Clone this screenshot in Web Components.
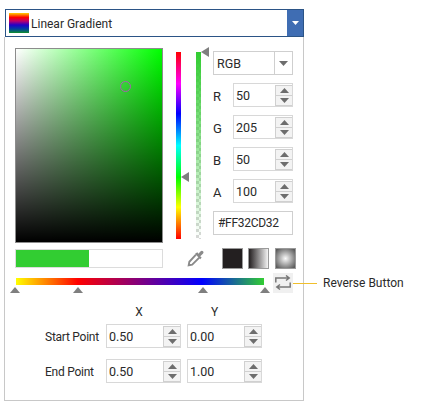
<!doctype html>
<html>
<head>
<meta charset="utf-8">
<style>
    html, body { margin: 0; background: #fff; }
    body { font: 12px Roboto, sans-serif; color: #2a2a2a; }
</style>
</head>
<body>
<brush-editor></brush-editor>
<script>
const arrow = dir => `<svg width="9" height="5" viewBox="0 0 9 5"><path fill="#6d6d6d" d="${ dir == 'up' ? 'M0 5 L4.5 0 L9 5Z' : 'M0 0 L9 0 L4.5 5Z' }"/></svg>`

class BrushCombo extends HTMLElement {
    constructor() {
        super()
        this.attachShadow({ mode: 'open' }).innerHTML = `
            <style>
                :host { display: flex; align-items: stretch; height: 28px; box-sizing: border-box; margin: 0 139px 0 5px; border: 1px solid #2b5486; }
                .swatch { width: 20px; height: 20px; margin: 3px 2px 0 3px; background: linear-gradient(#ffd000, #ff0000 22%, #c0006a 40%, #2200c8 60%, #0040a0 80%, #109030); }
                .label { flex: 1; line-height: 28px; }
                .button { width: 16px; background: #3f6db3; display: flex; align-items: center; justify-content: center; }
            </style>
            <div class="swatch"></div>
            <div class="label"><slot></slot></div>
            <div class="button"><svg width="7" height="4" viewBox="0 0 7 4"><path fill="#fff" d="M0 0H7L3.5 4Z"/></svg></div>
        `
    }
}

class SpinBox extends HTMLElement {
    constructor() {
        super()
        this.attachShadow({ mode: 'open' }).innerHTML = `
            <style>
                :host { display: flex; box-sizing: border-box; width: var(--w, 60px); height: 24px; border: 1px solid #d8d8d8; background: #fff; }
                .value { flex: 1; line-height: 23px; padding-left: 2px; font-size: 12.5px; }
                .arrows { width: 17px; display: flex; flex-direction: column; box-sizing: border-box; padding: 1px 0 0 0; }
                .arrows div { flex: 1; box-sizing: border-box; background: #f3f3f3; border: 1px solid #d0d0d0; border-right: 0; display: flex; align-items: center; justify-content: center; }
                .arrows div + div { border-top: 0; }
            </style>
            <div class="value"><slot></slot></div>
            <div class="arrows"><div>${arrow('up')}</div><div>${arrow('down')}</div></div>
        `
    }
}

class ColorChannel extends HTMLElement {
    constructor() {
        super()
        this.attachShadow({ mode: 'open' }).innerHTML = `
            <style>
                :host { display: flex; align-items: center; height: 24px; margin-top: 8px; }
                .name { width: 20px; font-size: 13px; padding-top: 3px; box-sizing: border-box; }
            </style>
            <div class="name"></div>
            <spin-box></spin-box>
        `
    }
    connectedCallback() {
        this.shadowRoot.querySelector('.name').textContent = this.getAttribute('name')
        this.shadowRoot.querySelector('spin-box').textContent = this.getAttribute('value')
    }
}

class ModeSelect extends HTMLElement {
    constructor() {
        super()
        this.attachShadow({ mode: 'open' }).innerHTML = `
            <style>
                :host { display: flex; box-sizing: border-box; width: 80px; height: 24px; border: 1px solid #cfcfcf; }
                .value { flex: 1; padding-left: 3px; line-height: 23px; font-size: 12.5px; }
                .button { width: 17px; border-left: 1px solid #cfcfcf; display: flex; align-items: center; justify-content: center; }
            </style>
            <div class="value"><slot></slot></div>
            <div class="button">${arrow('down')}</div>
        `
    }
}

class ColorCanvas extends HTMLElement {
    constructor() {
        super()
        this.attachShadow({ mode: 'open' }).innerHTML = `
            <style>
                :host { display: block; position: relative; box-sizing: border-box; width: 148px; height: 195px; border: 1px solid #8c8c8c;
                    background: linear-gradient(to top, #000, transparent), linear-gradient(to right, #fff, #00ff00); }
                .pointer { position: absolute; left: 104px; top: 32px; width: 11px; height: 11px; box-sizing: border-box; border: 1.5px solid #a85fb0; border-radius: 50%; }
            </style>
            <div class="pointer"></div>
        `
    }
}

class ColorSliders extends HTMLElement {
    constructor() {
        super()
        this.attachShadow({ mode: 'open' }).innerHTML = `
            <style>
                :host { display: flex; gap: 15px; box-sizing: border-box; position: relative; width: 50px; height: 195px; padding: 4px 0 4px 13px; }
                .bar { width: 5px; }
                .hue { background: linear-gradient(#ff0000, #ff00ff 17%, #0000ff 33%, #00ffff 50%, #00ff00 67%, #ffff00 83%, #ff0000); }
                .alpha { background:
                    linear-gradient(#32cd32, rgba(50,205,50,0)),
                    repeating-conic-gradient(#d8d8d8 0 25%, #fff 0 50%) 0 0 / 6px 6px; }
                .thumb { position: absolute; width: 0; height: 0; border: 5px solid transparent; border-right: 8px solid #7f7f7f; border-left: 0; }
            </style>
            <div class="bar hue"></div>
            <div class="bar alpha"></div>
            <div class="thumb" style="left: 18px; top: 124px"></div>
            <div class="thumb" style="left: 38px; top: -1px"></div>
        `
    }
}

class GradientBar extends HTMLElement {
    constructor() {
        super()
        this.attachShadow({ mode: 'open' }).innerHTML = `
            <style>
                :host { display: block; position: relative; width: 249px; height: 20px; padding-top: 5px; box-sizing: border-box; }
                .bar { margin-left: 1px; height: 7px;
                    background: linear-gradient(to right, #ffff00, #ff0000 25%, #0000ff 75%, #32cd32); }
                .stop { position: absolute; top: 14px; width: 0; height: 0; border: 5px solid transparent; border-bottom: 6px solid #7f7f7f; border-top: 0; }
            </style>
            <div class="bar"></div>
            <div class="stop" style="left: -5px"></div>
            <div class="stop" style="left: 58px"></div>
            <div class="stop" style="left: 183px"></div>
            <div class="stop" style="left: 245px"></div>
        `
    }
}

class BrushEditor extends HTMLElement {
    constructor() {
        super()
        this.attachShadow({ mode: 'open' }).innerHTML = `
            <style>
                :host { display: block; position: relative; box-sizing: border-box; width: 443px; height: 416px; padding-top: 9px; }
                .popup { box-sizing: border-box; width: 300px; height: 364px; margin-left: 4px; padding: 11px 10px 0 10px; border: 1px solid #c8c8c8; border-top: 0; }
                .top { display: flex; height: 195px; }
                .fields { padding-top: 3px; width: 80px; }
                .hex { box-sizing: border-box; height: 24px; margin-top: 8px; border: 1px solid #cfcfcf; padding-left: 4px; line-height: 23px; letter-spacing: -0.3px; }
                .second { display: flex; align-items: center; margin-top: 6px; height: 19px; }
                .second > * { flex: none; }
                .preview { box-sizing: border-box; width: 148px; height: 19px; border: 1px solid #dcdcdc; background: linear-gradient(to right, #32cd32 73px, #fff 73px); }
                .picker { margin-left: 24px; width: 17px; height: 17px; }
                .kind { box-sizing: border-box; width: 21px; height: 21px; margin-left: 5px; border: 1px solid #9a9a9a; }
                .solid { margin-left: 18px; background: #231f20; }
                .linear { background: linear-gradient(to right, #231f20, #f4f4f4); }
                .radial { margin-left: 6px; background: radial-gradient(circle, #fafafa, #5d5d5d 90%); }
                .third { display: flex; margin-top: 5px; height: 21px; }
                .reverse { width: 20px; height: 20px; margin-left: 9px; background: #f0f0f0; display: flex; align-items: center; justify-content: center; }
                .points { display: grid; grid-template-columns: 85px 75px 75px; grid-template-rows: 19px 35px 24px; column-gap: 6px; margin-top: 11px; align-items: start; }
                .head { line-height: 15px; text-align: center; }
                .head.x { padding-right: 9px; }
                .head.y { padding-right: 20px; }
                .row-label { padding-left: 30px; line-height: 26px; white-space: nowrap; letter-spacing: -0.25px; }
                spin-box { --w: 75px; }
                .note { position: absolute; left: 293px; top: 283px; width: 24px; height: 1px; background: #f0bf2c; }
                .note-text { position: absolute; left: 323px; top: 275px; line-height: 16px; white-space: nowrap; }
            </style>
            <brush-combo>Linear Gradient</brush-combo>
            <div class="popup">
                <div class="top">
                    <color-canvas></color-canvas>
                    <color-sliders></color-sliders>
                    <div class="fields">
                        <mode-select>RGB</mode-select>
                        <color-channel name="R" value="50"></color-channel>
                        <color-channel name="G" value="205"></color-channel>
                        <color-channel name="B" value="50"></color-channel>
                        <color-channel name="A" value="100"></color-channel>
                        <div class="hex">#FF32CD32</div>
                    </div>
                </div>
                <div class="second">
                    <div class="preview"></div>
                    <svg class="picker" viewBox="0 0 18 18"><path fill="none" stroke="#8a8a8a" stroke-width="2" d="M9.5 5 L2.5 12.5 L1.8 16.2 L5.5 15.5 L13 8"/><path fill="#8a8a8a" d="M8.5 4 L11 2.5 L12 4 L14.5 1.2 Q16 0.3 17.2 1.6 Q18 3 16.8 4 L14 6.5 L15.5 8 L14 9.8 Z"/></svg>
                    <div class="kind solid"></div>
                    <div class="kind linear"></div>
                    <div class="kind radial"></div>
                </div>
                <div class="third">
                    <gradient-bar></gradient-bar>
                    <div class="reverse"><svg width="16" height="16" viewBox="0 0 16 16"><path fill="none" stroke="#777" stroke-width="1.5" d="M0.8 7.5 V3 H14 M11 0.5 L14.2 3 L11 5.5 M15.2 7.5 V12 H2 M5 9.5 L1.8 12 L5 14.5"/></svg></div>
                </div>
                <div class="points">
                    <div></div><div class="head x">X</div><div class="head y">Y</div>
                    <div class="row-label">Start Point</div><spin-box>0.50</spin-box><spin-box>0.00</spin-box>
                    <div class="row-label">End Point</div><spin-box>0.50</spin-box><spin-box>1.00</spin-box>
                </div>
            </div>
            <div class="note"></div>
            <div class="note-text">Reverse Button</div>
        `
    }
}

customElements.define('brush-combo', BrushCombo)
customElements.define('spin-box', SpinBox)
customElements.define('color-channel', ColorChannel)
customElements.define('mode-select', ModeSelect)
customElements.define('color-canvas', ColorCanvas)
customElements.define('color-sliders', ColorSliders)
customElements.define('gradient-bar', GradientBar)
customElements.define('brush-editor', BrushEditor)
</script>
</body>
</html>
